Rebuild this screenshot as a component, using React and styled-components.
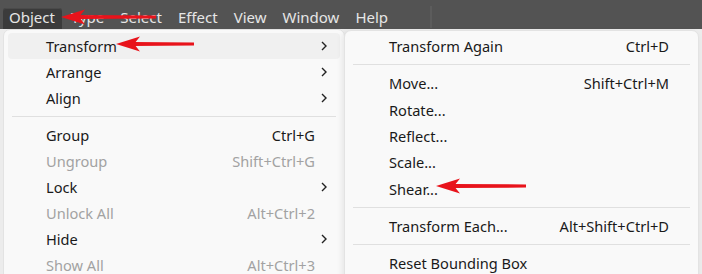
import React from "react";
import styled, { createGlobalStyle } from "styled-components";

const GlobalStyle = createGlobalStyle`
  html, body {
    margin: 0;
    padding: 0;
    background: #ececec;
    overflow: hidden;
  }
  #root {
    width: 702px;
    height: 274px;
    overflow: hidden;
    position: relative;
  }
`;

const font = `"Segoe UI", "Noto Sans", "Open Sans", sans-serif`;

const Page = styled.div`
  display: flex;
  flex-direction: column;
  width: 702px;
  height: 274px;
  font-family: ${font};
  font-size: 14.6px;
`;

const MenuBar = styled.div`
  display: flex;
  align-items: flex-end;
  height: 29px;
  padding-left: 3px;
  background: #535353;
  flex-shrink: 0;
  font-size: 15px;
`;

const BarItem = styled.div`
  height: 21px;
  line-height: 19px;
  padding: 0 7px 0 6px;
  margin-right: 3px;
  color: #e6e6e6;
  border-radius: 3px 3px 0 0;
  background: ${(p) => (p.active ? "#3b3b3b" : "transparent")};
  box-shadow: ${(p) => (p.active ? "inset 0 1px 0 #4a4a4a" : "none")};
`;

const BarDivider = styled.div`
  width: 2px;
  height: 22px;
  margin: 0 0 1px 32px;
  background: #5c5c5c;
`;

const Body = styled.div`
  display: flex;
  align-items: flex-start;
  flex: 1;
`;

const Menu = styled.div`
  background: #f9f9f9;
  border: 1px solid #e3e3e3;
  box-sizing: border-box;
  width: ${(p) => p.width}px;
  margin-left: ${(p) => p.offset}px;
  margin-top: ${(p) => p.top}px;
  padding: ${(p) => p.pad}px 4px 4px;
  border-radius: 7px 7px 0 0;
  height: 300px;
  box-shadow: ${(p) => (p.raised ? "-2px 2px 6px rgba(0,0,0,0.08)" : "none")};
  position: relative;
`;

const Row = styled.div`
  display: flex;
  align-items: center;
  height: ${(p) => p.h}px;
  padding-left: ${(p) => p.indent}px;
  padding-right: ${(p) => p.tail}px;
  border-radius: 4px;
  background: ${(p) => (p.hover ? "#f0f0f0" : "transparent")};
  color: ${(p) => (p.disabled ? "#a2a2a2" : "#1a1a1a")};
  position: relative;
`;

const Label = styled.span`
  flex: 1;
  white-space: nowrap;
`;

const Shortcut = styled.span`
  white-space: nowrap;
`;

const ChevronBox = styled.span`
  position: absolute;
  right: 13px;
  top: 8px;
  display: flex;
`;

const Separator = styled.div`
  height: 1px;
  margin: ${(p) => p.space}px 4px;
  background: #e0e0e0;
`;

const ArrowSvg = styled.svg`
  position: absolute;
  left: ${(p) => p.x}px;
  top: ${(p) => p.y - 8}px;
  pointer-events: none;
`;

function Chevron() {
  return (
    <ChevronBox>
      <svg width="6" height="10" viewBox="0 0 6 10">
        <path d="M1 1 L5 5 L1 9" fill="none" stroke="#222" strokeWidth="1.4" />
      </svg>
    </ChevronBox>
  );
}

function Arrow({ x, y, length }) {
  return (
    <ArrowSvg x={x} y={y} width={length} height="16" viewBox={`0 0 ${length} 16`}>
      <path d={`M17 6 L${length} 6.4 L${length} 9.6 L17 10 Z`} fill="#e8131b" />
      <path d="M0 8 L24 0.5 L18 8 L24 15.5 Z" fill="#e8131b" />
    </ArrowSvg>
  );
}

const barItems = ["Object", "Type", "Select", "Effect", "View", "Window", "Help"];

const mainItems = [
  { label: "Transform", sub: true, hover: true },
  { label: "Arrange", sub: true },
  { label: "Align", sub: true },
  { sep: true },
  { label: "Group", key: "Ctrl+G" },
  { label: "Ungroup", key: "Shift+Ctrl+G", disabled: true },
  { label: "Lock", sub: true },
  { label: "Unlock All", key: "Alt+Ctrl+2", disabled: true },
  { label: "Hide", sub: true },
  { label: "Show All", key: "Alt+Ctrl+3", disabled: true },
];

const subItems = [
  { label: "Transform Again", key: "Ctrl+D" },
  { sep: true },
  { label: "Move...", key: "Shift+Ctrl+M" },
  { label: "Rotate..." },
  { label: "Reflect..." },
  { label: "Scale..." },
  { label: "Shear..." },
  { sep: true },
  { label: "Transform Each...", key: "Alt+Shift+Ctrl+D" },
  { sep: true },
  { label: "Reset Bounding Box" },
];

function MenuRows({ items, indent, tail, h }) {
  return items.map((it, i) =>
    it.sep ? (
      <Separator key={i} space={5} />
    ) : (
      <Row key={i} h={h} indent={indent} tail={tail} hover={it.hover} disabled={it.disabled}>
        <Label>{it.label}</Label>
        {it.key && <Shortcut>{it.key}</Shortcut>}
        {it.sub && <Chevron />}
      </Row>
    )
  );
}

export default function App() {
  return (
    <>
      <GlobalStyle />
      <Page>
        <MenuBar>
          {barItems.map((b, i) => (
            <BarItem key={b} active={i === 0}>
              {b}
            </BarItem>
          ))}
          <BarDivider />
        </MenuBar>
        <Body>
          <Menu width={342} offset={3} top={0} pad={3}>
            <MenuRows items={mainItems} indent={38} tail={25} h={26} />
          </Menu>
          <Menu width={355} offset={-1} top={1} pad={2} raised>
            <MenuRows items={subItems} indent={40} tail={25} h={26.3} />
          </Menu>
        </Body>
      </Page>
      <Arrow x={61} y={17} length={95} />
      <Arrow x={116} y={44} length={78} />
      <Arrow x={436} y={186} length={90} />
    </>
  );
}
